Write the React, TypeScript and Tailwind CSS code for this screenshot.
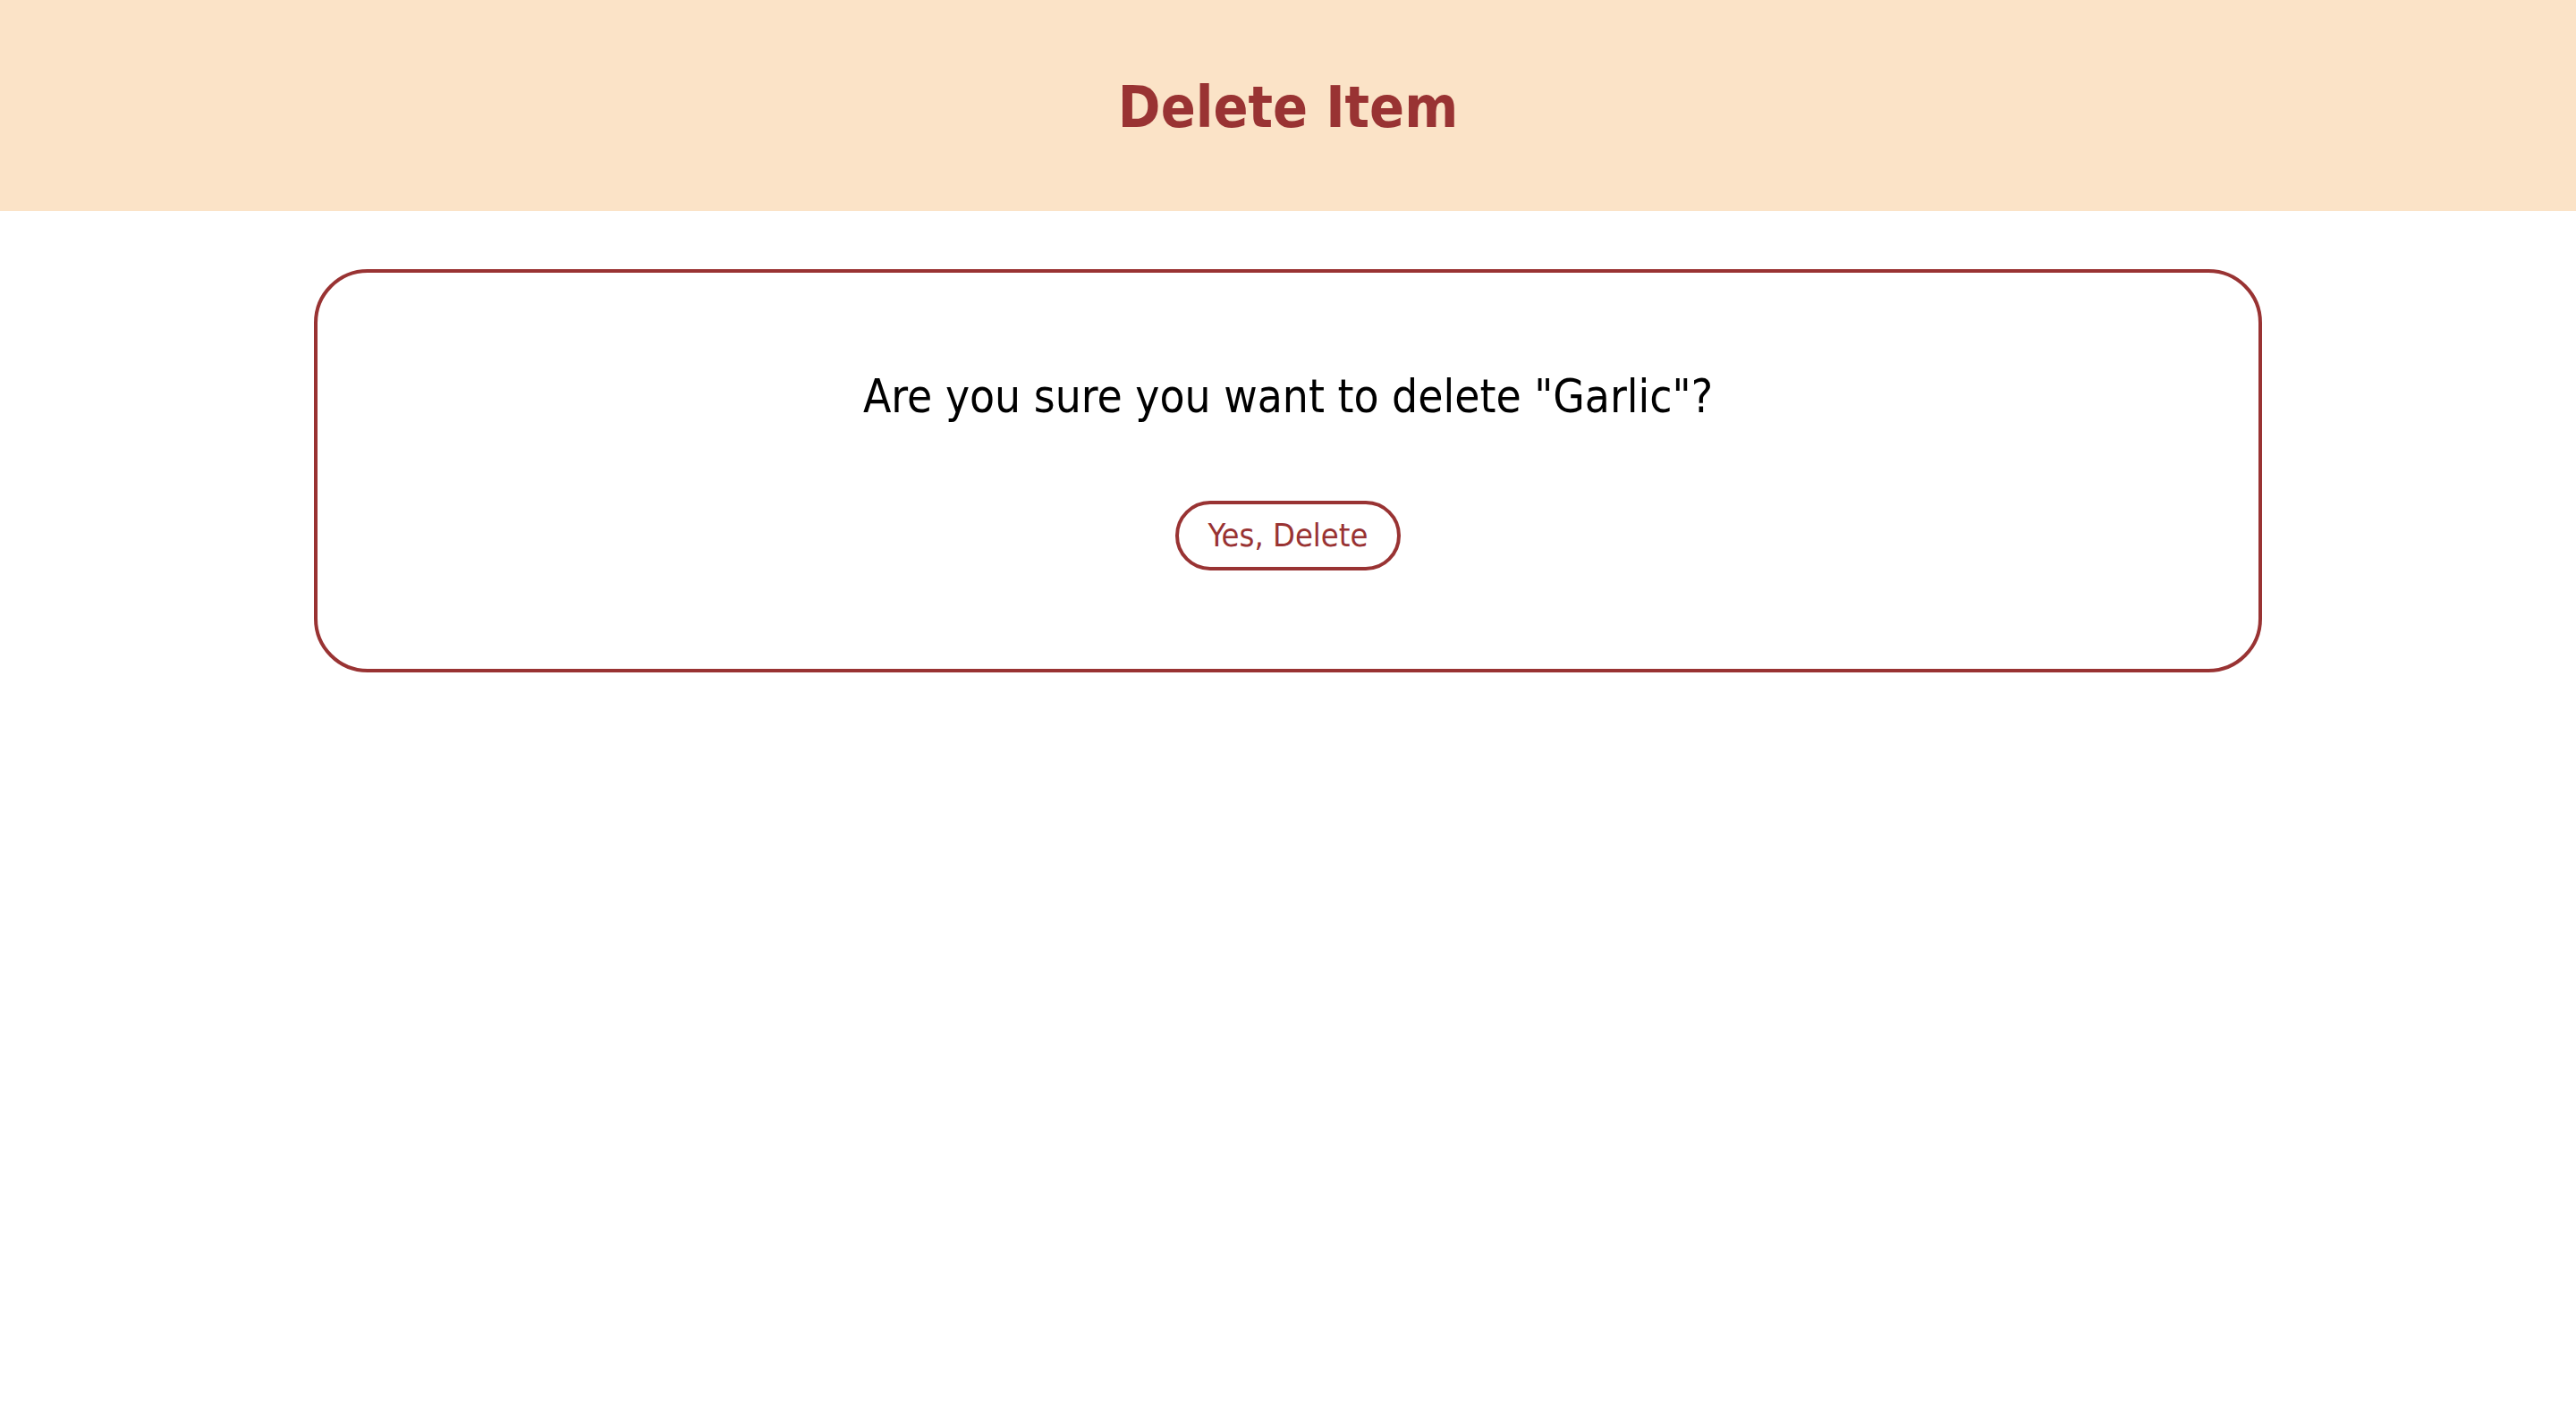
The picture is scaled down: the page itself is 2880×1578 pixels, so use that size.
import React from 'react'

const fontStack = "font-['DejaVu_Sans_Condensed','DejaVu_Sans',sans-serif] font-stretch-condensed"

export default function App() {
  const itemName = 'Garlic'

  return (
    <div className={`min-h-screen bg-white ${fontStack}`}>
      <header className="h-[236px] bg-[#fbe3c7] flex items-center justify-center pt-[3px]">
        <h1 className="text-[64px] font-bold text-[#993333] leading-normal">
          Delete Item
        </h1>
      </header>

      <main className="px-[351px] pt-[65px]">
        <div className="border-4 border-[#993333] rounded-[60px] pt-[109px] pb-[110px] flex flex-col items-center">
          <p className="text-[51px] leading-[60px] text-black">
            Are you sure you want to delete "{itemName}"?
          </p>
          <button className="mt-[86px] h-[78px] px-[33px] border-4 border-[#993333] rounded-full text-[36px] leading-[70px] text-[#993333] bg-white">
            Yes, Delete
          </button>
        </div>
      </main>
    </div>
  )
}
